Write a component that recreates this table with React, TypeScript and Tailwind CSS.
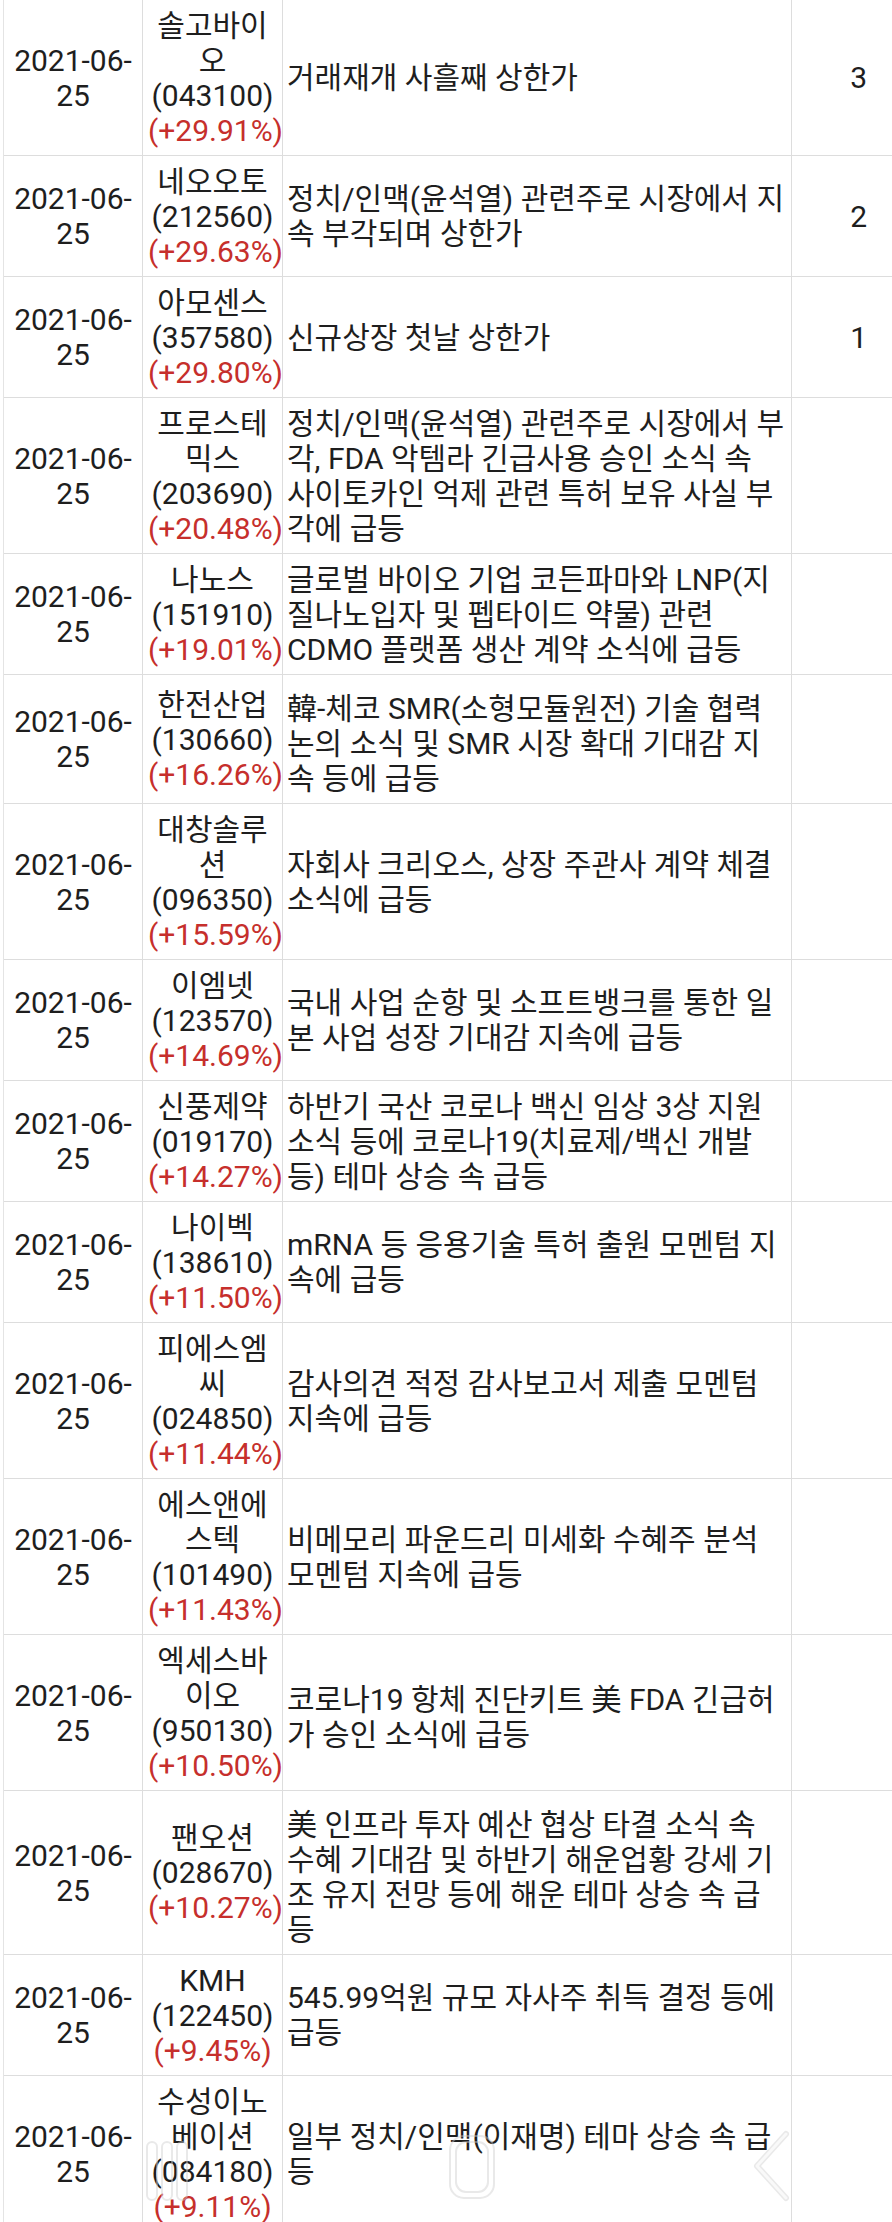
import React from "react";

type Row = {
  name: string[];
  pct: string;
  desc: string[];
  rank?: string;
};

const rows: Row[] = [
  { name: ["솔고바이", "오", "(043100)"], pct: "(+29.91%)", desc: ["거래재개 사흘째 상한가"], rank: "3" },
  {
    name: ["네오오토", "(212560)"],
    pct: "(+29.63%)",
    desc: ["정치/인맥(윤석열) 관련주로 시장에서 지", "속 부각되며 상한가"],
    rank: "2",
  },
  { name: ["아모센스", "(357580)"], pct: "(+29.80%)", desc: ["신규상장 첫날 상한가"], rank: "1" },
  {
    name: ["프로스테", "믹스", "(203690)"],
    pct: "(+20.48%)",
    desc: [
      "정치/인맥(윤석열) 관련주로 시장에서 부",
      "각, FDA 악템라 긴급사용 승인 소식 속",
      "사이토카인 억제 관련 특허 보유 사실 부",
      "각에 급등",
    ],
  },
  {
    name: ["나노스", "(151910)"],
    pct: "(+19.01%)",
    desc: ["글로벌 바이오 기업 코든파마와 LNP(지", "질나노입자 및 펩타이드 약물) 관련", "CDMO 플랫폼 생산 계약 소식에 급등"],
  },
  {
    name: ["한전산업", "(130660)"],
    pct: "(+16.26%)",
    desc: ["韓-체코 SMR(소형모듈원전) 기술 협력", "논의 소식 및 SMR 시장 확대 기대감 지", "속 등에 급등"],
  },
  {
    name: ["대창솔루", "션", "(096350)"],
    pct: "(+15.59%)",
    desc: ["자회사 크리오스, 상장 주관사 계약 체결", "소식에 급등"],
  },
  {
    name: ["이엠넷", "(123570)"],
    pct: "(+14.69%)",
    desc: ["국내 사업 순항 및 소프트뱅크를 통한 일", "본 사업 성장 기대감 지속에 급등"],
  },
  {
    name: ["신풍제약", "(019170)"],
    pct: "(+14.27%)",
    desc: ["하반기 국산 코로나 백신 임상 3상 지원", "소식 등에 코로나19(치료제/백신 개발", "등) 테마 상승 속 급등"],
  },
  {
    name: ["나이벡", "(138610)"],
    pct: "(+11.50%)",
    desc: ["mRNA 등 응용기술 특허 출원 모멘텀 지", "속에 급등"],
  },
  {
    name: ["피에스엠", "씨", "(024850)"],
    pct: "(+11.44%)",
    desc: ["감사의견 적정 감사보고서 제출 모멘텀", "지속에 급등"],
  },
  {
    name: ["에스앤에", "스텍", "(101490)"],
    pct: "(+11.43%)",
    desc: ["비메모리 파운드리 미세화 수혜주 분석", "모멘텀 지속에 급등"],
  },
  {
    name: ["엑세스바", "이오", "(950130)"],
    pct: "(+10.50%)",
    desc: ["코로나19 항체 진단키트 美 FDA 긴급허", "가 승인 소식에 급등"],
  },
  {
    name: ["팬오션", "(028670)"],
    pct: "(+10.27%)",
    desc: [
      "美 인프라 투자 예산 협상 타결 소식 속",
      "수혜 기대감 및 하반기 해운업황 강세 기",
      "조 유지 전망 등에 해운 테마 상승 속 급",
      "등",
    ],
  },
  {
    name: ["KMH", "(122450)"],
    pct: "(+9.45%)",
    desc: ["545.99억원 규모 자사주 취득 결정 등에", "급등"],
  },
  {
    name: ["수성이노", "베이션", "(084180)"],
    pct: "(+9.11%)",
    desc: ["일부 정치/인맥(이재명) 테마 상승 속 급", "등"],
  },
];

// hanja lines sit a bit lower in the screenshot (taller fallback font line)
const HANJA = /[\u4E00-\u9FFF]/;

function Line({ value, className = "" }: { value: string; className?: string }) {
  const tall = HANJA.test(value);
  return (
    <div
      className={`whitespace-nowrap leading-[35px] ${tall ? "h-[43px] pt-[8px]" : "h-[35px]"} ${className}`}
    >
      {value}
    </div>
  );
}

function TableRow({ row }: { row: Row }) {
  return (
    <div className="grid grid-cols-[139px_140px_509px_1fr] border-b border-[#dddddd]">
      <div className="flex flex-col items-center justify-center border-r border-[#dddddd] px-[4px] py-[7.5px]">
        <Line value="2021-06-" />
        <Line value="25" />
      </div>
      <div className="flex flex-col justify-center border-r border-[#dddddd] px-[5px] py-[7.5px] text-center">
        {row.name.map((n, i) => (
          <Line key={i} value={n} />
        ))}
        <Line value={row.pct} className="text-[#c62f2c]" />
      </div>
      <div className="flex flex-col justify-center border-r border-[#dddddd] py-[7.5px] pl-[4px] pr-[2px]">
        {row.desc.map((d, i) => (
          <Line key={i} value={d} />
        ))}
      </div>
      <div className="flex items-center justify-end py-[7.5px] pr-[25px]">
        {row.rank && <Line value={row.rank} />}
      </div>
    </div>
  );
}

function NavGhost() {
  return (
    <div className="pointer-events-none absolute left-0 top-[2128px] h-[80px] w-[892px]">
      <svg width="892" height="80" viewBox="0 0 892 80" fill="none">
        <g stroke="#cfcfcf" strokeWidth="2" opacity="0.45">
          <rect x="147" y="14" width="10" height="58" rx="5" />
          <rect x="162" y="14" width="10" height="58" rx="5" />
          <rect x="177" y="14" width="10" height="58" rx="5" />
          <rect x="450" y="8" width="44" height="62" rx="14" />
          <rect x="456" y="14" width="32" height="50" rx="10" />
          <path d="M786 6 L757 38 L786 70" strokeWidth="6" strokeLinecap="round" strokeLinejoin="round" />
        </g>
        <path d="M786 6 L757 38 L786 70" stroke="#ffffff" strokeWidth="3" strokeLinecap="round" strokeLinejoin="round" opacity="0.7" />
      </svg>
    </div>
  );
}

export default function App() {
  return (
    <div className="relative h-[2222px] w-[892px] overflow-hidden bg-white font-[family-name:Roboto,'Noto_Sans_CJK_KR',sans-serif] text-[30px] text-[#1e1e1e]">
      <div className="ml-[3px] w-[889px] border-l border-[#e4e4e4]">
        {rows.map((r, i) => (
          <TableRow key={i} row={r} />
        ))}
      </div>
      <NavGhost />
    </div>
  );
}
